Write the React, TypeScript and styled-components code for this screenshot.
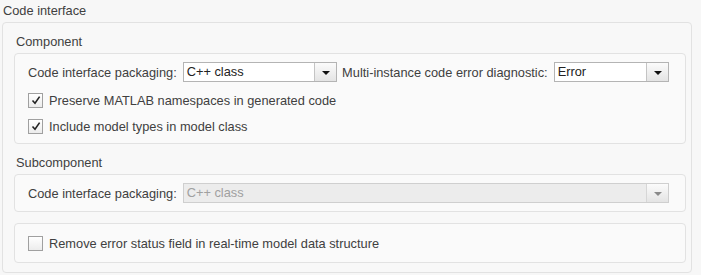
import React from 'react'
import styled, { createGlobalStyle } from 'styled-components'

const Global = createGlobalStyle`
  html, body {
    margin: 0;
    padding: 0;
    background: #f7f7f7;
  }
  body {
    font-family: "Liberation Sans", Arial, sans-serif;
    font-size: 12.8px;
    color: #404040;
  }
`

const Page = styled.div`
  width: 701px;
  height: 275px;
  box-sizing: border-box;
  padding: 0 9px 0 2px;
`

const Title = styled.div`
  height: 22px;
  box-sizing: border-box;
  padding: 3px 0 0 1px;
  line-height: 16px;
`

const Group = styled.div`
  border: 1px solid #e2e2e2;
  border-radius: 4px;
  background: #f8f8f8;
  padding: 0 5px 10px 11px;
  height: 251px;
  box-sizing: border-box;
`

const SectionLabel = styled.div`
  height: 30px;
  box-sizing: border-box;
  padding: 11px 0 0 2px;
  line-height: 16px;
`

const Panel = styled.div<{ $gapTop?: number; $padY?: number }>`
  border: 1px solid #e2e2e2;
  border-radius: 4px;
  background: #fafafa;
  padding: ${p => p.$padY ?? 8}px 11px ${p => p.$padY ?? 8}px 13px;
  margin-top: ${p => p.$gapTop ?? 0}px;
  display: flex;
  flex-direction: column;
`

const Row = styled.div<{ $h?: number }>`
  display: flex;
  align-items: center;
  height: ${p => p.$h ?? 20}px;
  white-space: nowrap;
`

const Spacer = styled.div<{ $h: number }>`
  height: ${p => p.$h}px;
`

const Label = styled.span`
  margin-right: 6px;
`

const Select = styled.div<{ $w?: number; $disabled?: boolean }>`
  display: flex;
  align-items: stretch;
  height: 20px;
  box-sizing: border-box;
  border: 1px solid ${p => (p.$disabled ? '#cfcfcf' : '#b4b4b4')};
  background: ${p => (p.$disabled ? '#ececec' : '#fff')};
  color: ${p => (p.$disabled ? '#a0a0a0' : '#222')};
  ${p => (p.$w ? `width: ${p.$w}px;` : 'flex: 1;')}
  margin-right: 5px;
`

const SelectText = styled.span`
  flex: 1;
  padding-left: 3px;
  line-height: 18px;
`

const Arrow = styled.span<{ $disabled?: boolean }>`
  width: 21px;
  border-left: 1px solid ${p => (p.$disabled ? '#d6d6d6' : '#c4c4c4')};
  background: linear-gradient(#fbfbfb, #e4e4e4);
  display: flex;
  align-items: center;
  justify-content: center;
  &::after {
    content: '';
    border-left: 4px solid transparent;
    border-right: 4px solid transparent;
    border-top: 4px solid ${p => (p.$disabled ? '#8a8a8a' : '#111')};
    margin-top: 1px;
  }
`

const Box = styled.span`
  width: 15px;
  height: 15px;
  box-sizing: border-box;
  border: 1px solid #a0a0a0;
  background: linear-gradient(#ffffff, #ececec);
  margin-right: 6px;
  display: flex;
  align-items: center;
  justify-content: center;
`

const Dropdown = ({ value, width, disabled }: { value: string; width?: number; disabled?: boolean }) => (
  <Select $w={width} $disabled={disabled}>
    <SelectText>{value}</SelectText>
    <Arrow $disabled={disabled} />
  </Select>
)

const Check = ({ checked, label }: { checked?: boolean; label: string }) => (
  <Row $h={18}>
    <Box>
      {checked && (
        <svg width="10" height="10" viewBox="0 0 10 10">
          <path d="M1.5 5.5 L4 8.2 L8.6 1.6" fill="none" stroke="#222" strokeWidth="1.6" />
        </svg>
      )}
    </Box>
    <span>{label}</span>
  </Row>
)

export default function App() {
  return (
    <Page>
      <Global />
      <Title>Code interface</Title>
      <Group>
        <SectionLabel>Component</SectionLabel>
        <Panel>
          <Row>
            <Label>Code interface packaging:</Label>
            <Dropdown value="C++ class" width={158} />
            <Label>Multi-instance code error diagnostic:</Label>
            <Dropdown value="Error" width={118} />
          </Row>
          <Spacer $h={9} />
          <Check checked label="Preserve MATLAB namespaces in generated code" />
          <Spacer $h={8} />
          <Check checked label="Include model types in model class" />
        </Panel>
        <SectionLabel>Subcomponent</SectionLabel>
        <Panel>
          <Row>
            <Label>Code interface packaging:</Label>
            <Dropdown value="C++ class" disabled />
          </Row>
        </Panel>
        <Panel $gapTop={11} $padY={10}>
          <Check label="Remove error status field in real-time model data structure" />
        </Panel>
      </Group>
    </Page>
  )
}
